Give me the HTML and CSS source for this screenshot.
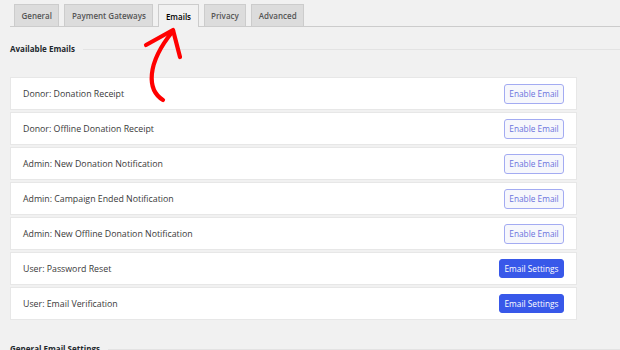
FILE: index.html
```html
<!DOCTYPE html>
<html lang="en">
<head>
    <meta charset="UTF-8">
    <meta name="viewport" content="width=device-width, initial-scale=1.0">
    <title>Email Settings</title>
    <link rel="stylesheet" href="styles.css">
</head>
<body>

<nav class="tabs">
    <a class="tab" href="#">General</a>
    <a class="tab" href="#">Payment Gateways</a>
    <a class="tab active" href="#">Emails</a>
    <a class="tab" href="#">Privacy</a>
    <a class="tab" href="#">Advanced</a>
</nav>

<main class="content">
    <h2 class="section-title">Available Emails</h2>

    <ul class="email-list">
        <li class="email-row"><span>Donor: Donation Receipt</span><button class="enable-button">Enable Email</button></li>
        <li class="email-row"><span>Donor: Offline Donation Receipt</span><button class="enable-button">Enable Email</button></li>
        <li class="email-row"><span>Admin: New Donation Notification</span><button class="enable-button">Enable Email</button></li>
        <li class="email-row"><span>Admin: Campaign Ended Notification</span><button class="enable-button">Enable Email</button></li>
        <li class="email-row"><span>Admin: New Offline Donation Notification</span><button class="enable-button">Enable Email</button></li>
        <li class="email-row"><span>User: Password Reset</span><button class="settings-button">Email Settings</button></li>
        <li class="email-row"><span>User: Email Verification</span><button class="settings-button">Email Settings</button></li>
    </ul>

    <h2 class="section-title bottom">General Email Settings</h2>
</main>

<!-- hand drawn pointer to the Emails tab -->
<svg class="arrow" width="620" height="350" viewBox="0 0 620 350">
    <path d="M163 100 C 147 90, 146 64, 173 31" />
    <path d="M146 45 L173 30 L180 57" />
</svg>

</body>
</html>
```

FILE: styles.css
```css
body { font-family: "Open Sans", Arial, sans-serif; background-color: #f1f1f1; margin: 0; color: #333; position: relative; height: 350px; overflow: hidden; }
.tabs { display: flex; gap: 5px; padding: 4px 0 0 4px; margin-left: 10px; border-bottom: 1px solid #ccc; height: 22px; }
.tab { display: flex; align-items: center; height: 22px; padding: 0 6.5px; box-sizing: border-box; background: #dcdcdc; border: 1px solid #ccc; border-bottom: none; color: #555; font-size: 8px; font-weight: 600; text-decoration: none; }
.tab.active { background: #f1f1f1; color: #000; height: 23px; margin-bottom: -1px; }
.content { padding: 0 44px 0 10px; }
.section-title { display: flex; align-items: center; gap: 8px; font-size: 8px; font-weight: 700; color: #23282d; line-height: 14px; margin: 15px -44px 22px 0; }
.section-title::after { content: ""; flex: 1; border-top: 1px solid #e3e3e3; }
.section-title.bottom { margin-top: 23px; }
.email-list { list-style: none; margin: 0; padding: 0; display: flex; flex-direction: column; gap: 4px; }
.email-row { display: flex; align-items: center; justify-content: space-between; height: 31px; margin-left: 1px; padding: 0 12px; background: #fff; box-shadow: 0 0 0 1px #e7e7e7; font-size: 8.8px; font-weight: 500; color: #3a3a3a; }
.email-row button { font-family: inherit; font-size: 8.3px; border-radius: 3px; cursor: pointer; }
.enable-button { width: 60px; height: 20px; padding: 0; background: #f6f7fc; border: 1px solid #a3abf2; color: #6a73dd; }
.settings-button { width: 65px; height: 19px; padding: 0; background: #3858e9; border: 1px solid #3858e9; color: #fff; }
.arrow { position: absolute; left: 0; top: 0; pointer-events: none; fill: none; stroke: #f00; stroke-width: 4.2; stroke-linecap: round; stroke-linejoin: round; }
```
